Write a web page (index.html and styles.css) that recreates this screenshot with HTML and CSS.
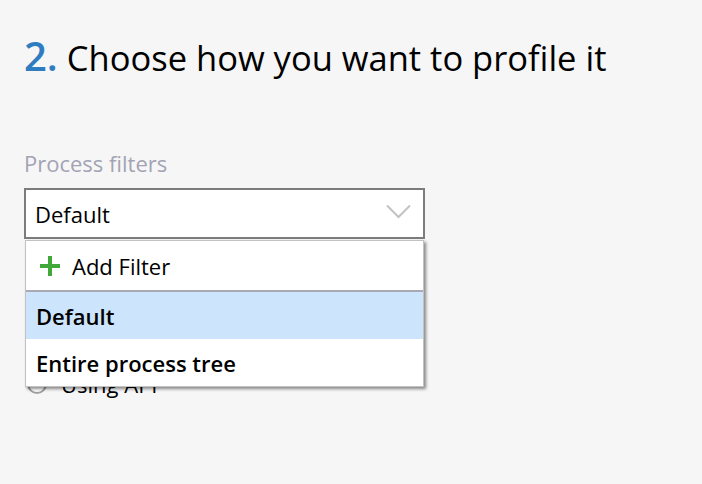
FILE: index.html
```html
<!DOCTYPE html>
<html>
<head>
<meta charset="utf-8">
<link rel="stylesheet" href="styles.css">
</head>
<body>
<div class="page">
  <h1 class="title"><span class="num">2.</span> Choose how you want to profile it</h1>
  <div class="label">Process filters</div>
  <div class="combo-wrap">
    <div class="combo">
      <span class="combo-value">Default</span>
      <svg class="chev" width="25" height="15" viewBox="0 0 25 15"><path d="M1 1.5 L12.5 13 L24 1.5" fill="none" stroke="#c2c2c2" stroke-width="2"/></svg>
    </div>
    <div class="menu">
      <div class="item add">
        <svg class="plus" width="20" height="20" viewBox="0 0 20 20"><path d="M10 0 V20 M0 10 H20" stroke="#43a83a" stroke-width="4"/></svg>
        <span>Add Filter</span>
      </div>
      <div class="item opt selected">Default</div>
      <div class="item opt">Entire process tree</div>
    </div>
  </div>
  <div class="radios">
    <div class="radio"><span class="circle"></span><span>Using API</span></div>
  </div>
</div>
</body>
</html>
```
FILE: styles.css
```css
html, body {
  margin: 0;
  padding: 0;
  background: #f6f6f6;
  font-family: "Open Sans", "Noto Sans", sans-serif;
  color: #000;
}
body {
  min-height: 484px;
}
.page {
  padding: 26px 0 0 24px;
}
.title {
  margin: 0;
  font-weight: 400;
  font-size: 34.5px;
  line-height: 60px;
  display: flex;
  align-items: baseline;
  gap: 9px;
}
.num {
  color: #2f7cc0;
  font-weight: 600;
  font-size: 40px;
}
.label {
  margin-top: 60px;
  font-size: 22px;
  line-height: 30px;
  color: #a3a3b5;
}
.combo-wrap {
  position: relative;
  margin-top: 10px;
  width: 401px;
}
.combo {
  box-sizing: border-box;
  height: 51px;
  border: 2px solid #7c7c7c;
  background: #fff;
  display: flex;
  align-items: center;
  justify-content: space-between;
  padding: 0 12px 0 9px;
}
.combo-value {
  font-size: 22px;
}
.chev {
  margin-top: -4px;
}
.menu {
  position: absolute;
  top: 52px;
  left: 1px;
  width: 399px;
  box-sizing: border-box;
  background: #fff;
  border: 1px solid #c2c2c2;
  box-shadow: 2px 2px 3px rgba(0,0,0,0.45);
}
.item {
  height: 47px;
  display: flex;
  align-items: center;
  font-size: 22px;
}
.add {
  height: 49px;
  padding-left: 14px;
  gap: 12px;
  border-bottom: 2px solid #a9a9b4;
}
.opt {
  padding-left: 10px;
  font-weight: 600;
}
.selected {
  background: #cce4fc;
}
.radios {
  margin-top: 130px;
  display: flex;
  flex-direction: column;
  font-size: 22px;
}
.radio {
  display: flex;
  align-items: center;
  gap: 14px;
  padding-left: 3px;
  line-height: 30px;
}
.circle {
  box-sizing: border-box;
  width: 20px;
  height: 20px;
  border: 2px solid #a0a0a0;
  border-radius: 50%;
  background: #fff;
}
```
